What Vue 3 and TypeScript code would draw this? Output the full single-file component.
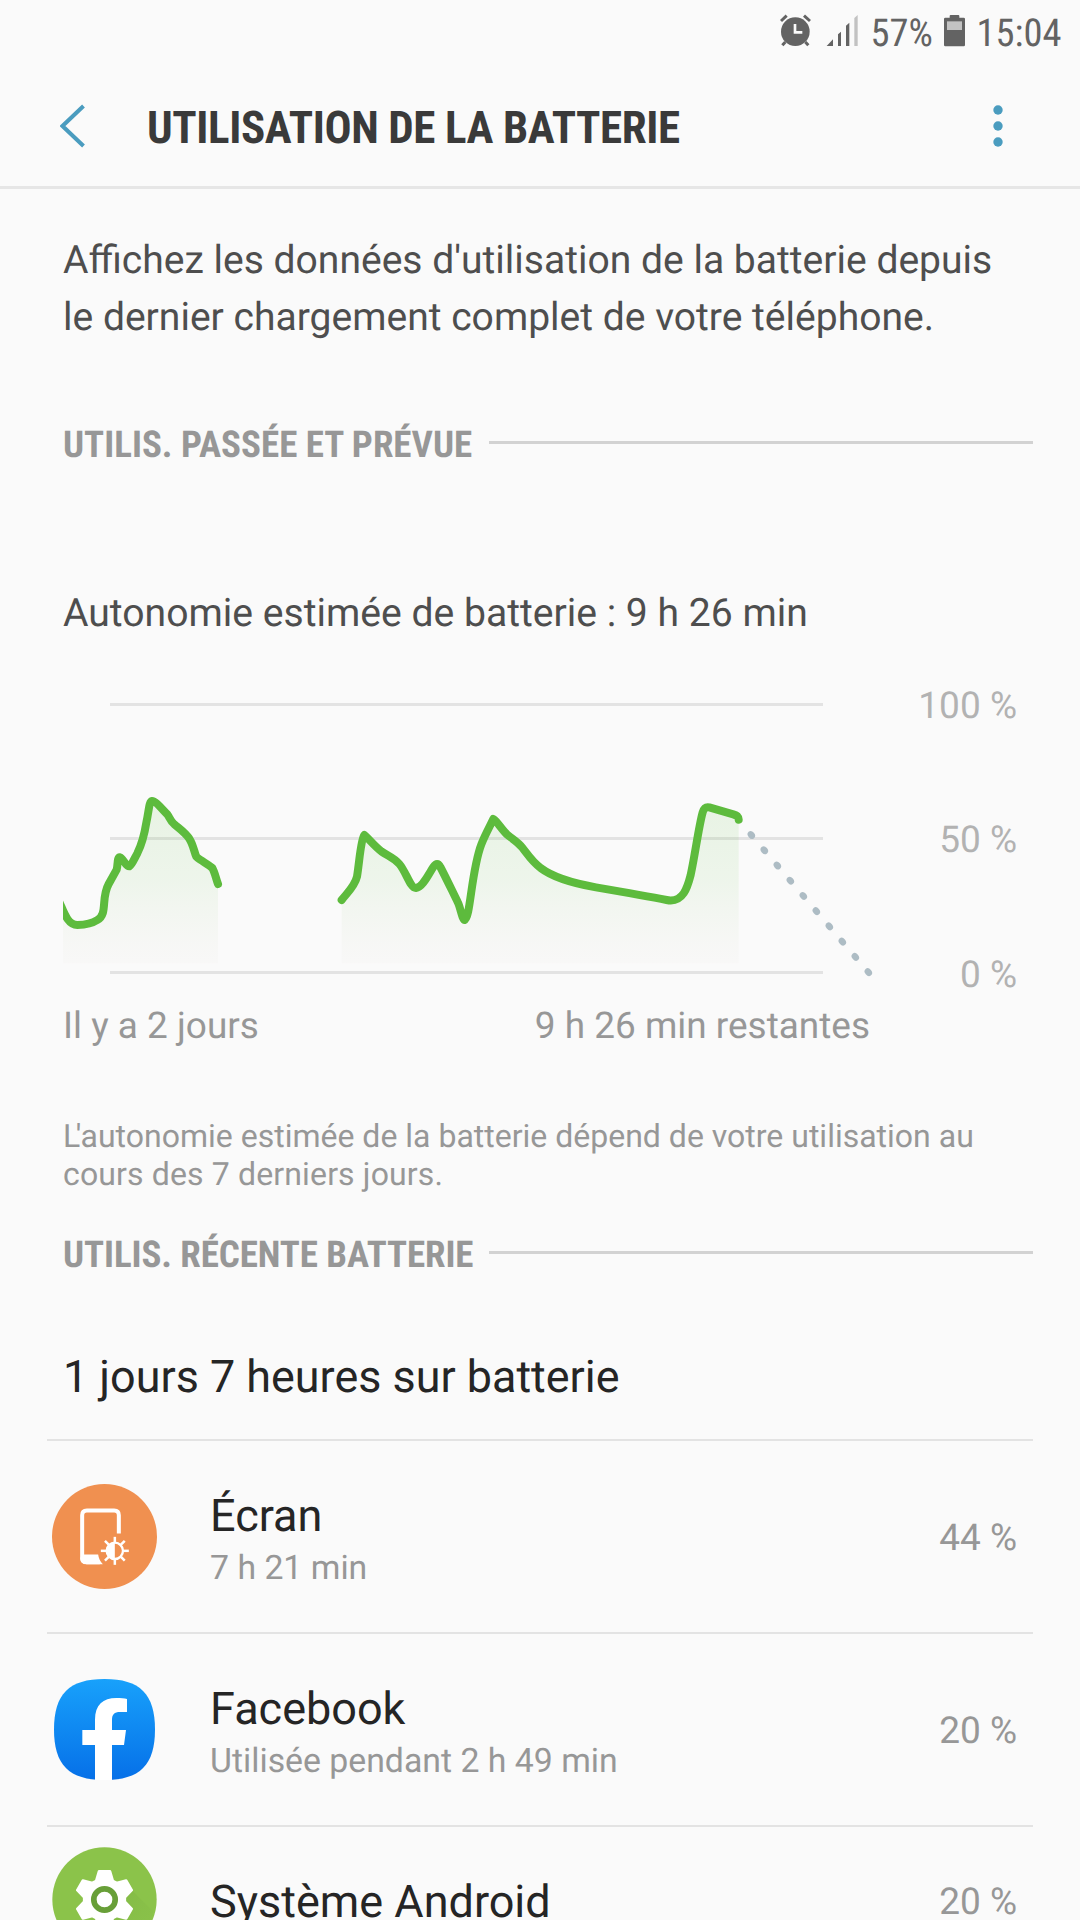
<script setup lang="ts">
interface AppUsage {
  id: string
  name: string
  detail?: string
  percent: string
}

const apps: AppUsage[] = [
  { id: 'screen', name: 'Écran', detail: '7 h 21 min', percent: '44 %' },
  { id: 'facebook', name: 'Facebook', detail: 'Utilisée pendant 2 h 49 min', percent: '20 %' },
  { id: 'android', name: 'Système Android', percent: '20 %' },
]

const levels = ['100 %', '50 %', '0 %']
const gridLines = [704.5, 838.5, 972.5]

// Level curves, in thirds of a pixel
const pastCurve =
  'M58 966C70 992 82 1035 112 1035C140 1034 160 1028 172 1020C204 1003 182 955 206 912L230 869C234 855 231 831 240 832C249 834 257 860 268 859C276 854 282 838 292 820C306 792 313 765 319 728C327 692 327 664 336 663C346 662 368 689 382 703C388 711 392 724 402 732C418 746 434 756 448 776C460 794 463 818 469 830C484 844 503 851 517 864C525 878 528 897 534 912'
const recentCurve =
  'M905 960C920 940 944 920 951 890C959 840 962 780 973 765C990 780 1003 798 1024 814C1046 829 1061 832 1078 852C1098 875 1111 925 1128 924C1148 922 1167 880 1180 861C1188 849 1195 849 1201 861C1218 893 1240 940 1254 968C1262 986 1267 1020 1274 1020C1291 1016 1294 870 1324 793C1336 763 1350 738 1360 717C1374 727 1385 749 1402 764C1418 778 1433 785 1447 803C1464 825 1477 846 1502 864C1540 893 1600 910 1668 922C1750 936 1830 950 1880 960C1930 970 1943 920 1952 885C1966 820 1976 740 1988 697C1992 684 1998 680 2008 682L2080 703C2092 707 2095 708 2096 719'

const pastArea = `${pastCurve}V1150H58Z`
const recentArea = `${recentCurve}V1150H905Z`

const dots = Array.from({ length: 10 }, (_, i) => ({
  x: 2134 + i * 39,
  y: 765 + i * 45.7,
}))

function polar(radius: number, degrees: number): string {
  const a = (degrees * Math.PI) / 180
  return `${(radius * Math.cos(a)).toFixed(1)} ${(radius * Math.sin(a)).toFixed(1)}`
}

const gear =
  'M' +
  Array.from({ length: 6 }, (_, i) => {
    const c = -90 + i * 60
    return [polar(61, c - 24), polar(86, c - 11), polar(86, c + 11), polar(61, c + 24)].join('L')
  }).join('L') +
  'Z'
</script>

<template>
  <div class="screen">
    <div class="status">
      <svg class="alarm" viewBox="59 42 93 99" width="31" height="33">
        <circle cx="105" cy="95" r="43" fill="#636363" />
        <path d="M62 63L79 47M131 47L149 63M75 126L66 136M135 126L144 136" stroke="#636363" stroke-width="9" />
        <path d="M104 72V97H126" fill="none" stroke="#fafafa" stroke-width="8" />
      </svg>
      <svg class="signal" viewBox="198 42 99 99" width="33" height="33">
        <path d="M200 138H219V118ZM234 138V103L243 95V138ZM258 138V77L268 68V138Z" fill="#636363" />
        <path d="M283 138V54L293 45V138Z" fill="#c2c2c2" />
      </svg>
      <span class="pct">57%</span>
      <svg class="cell" viewBox="552 42 63 99" width="21" height="33">
        <path d="M569 53V48Q569 45 572 45H595Q598 45 598 48V53H611Q615 53 615 57V135Q615 139 611 139H556Q552 139 552 135V57Q552 53 556 53Z" fill="#636363" />
        <path d="M561 64H606V90H561Z" fill="#c2c2c2" />
      </svg>
      <span class="clock">15:04</span>
    </div>

    <header class="header">
      <svg class="back" viewBox="0 0 26 44" width="26" height="44">
        <path d="M23.5 2L2.5 22L23.5 42" fill="none" stroke="#4a9cbf" stroke-width="4" />
      </svg>
      <h1>UTILISATION DE LA BATTERIE</h1>
      <svg class="more" viewBox="0 0 10 42" width="10" height="42">
        <circle v-for="y in [5, 21, 37]" :key="y" cx="5" :cy="y" r="4.7" fill="#4a9cbf" />
      </svg>
    </header>

    <p class="intro">Affichez les données d'utilisation de la batterie depuis<br />le dernier chargement complet de votre téléphone.</p>

    <div class="section first"><h2>UTILIS. PASSÉE ET PRÉVUE</h2><i></i></div>

    <p class="estimate">Autonomie estimée de batterie : 9 h 26 min</p>

    <div class="chart">
      <svg viewBox="63 685 820 311" width="820" height="311">
        <defs>
          <linearGradient id="fade" gradientUnits="userSpaceOnUse" x1="0" y1="650" x2="0" y2="1160">
            <stop offset="0" stop-color="#5fbd3e" stop-opacity=".12" />
            <stop offset=".5" stop-color="#5fbd3e" stop-opacity=".08" />
            <stop offset="1" stop-color="#c8b8a8" stop-opacity=".03" />
          </linearGradient>
        </defs>
        <path v-for="y in gridLines" :key="y" :d="`M110 ${y}H823`" stroke="#e3e3e3" stroke-width="3" />
        <g transform="translate(40 580) scale(.333333)">
          <path :d="pastArea" fill="url(#fade)" />
          <path :d="recentArea" fill="url(#fade)" />
          <g fill="none" stroke="#5dbb3d" stroke-width="24" stroke-linecap="round" stroke-linejoin="round">
            <path :d="pastCurve" />
            <path :d="recentCurve" />
          </g>
          <ellipse
            v-for="d in dots"
            :key="d.x"
            rx="12.5"
            ry="10"
            :transform="`translate(${d.x} ${d.y}) rotate(49.5)`"
            fill="#adbcc4"
          />
        </g>
      </svg>
      <div class="levels"><span v-for="l in levels" :key="l">{{ l }}</span></div>
    </div>
    <div class="axis"><span>Il y a 2 jours</span><span>9 h 26 min restantes</span></div>

    <p class="note"><span class="elision">L</span>'autonomie estimée de la batterie dépend de votre utilisation au<br /><span class="last">cours des 7 derniers jours.</span></p>

    <div class="section second"><h2>UTILIS. RÉCENTE BATTERIE</h2><i></i></div>

    <p class="since">1 jours 7 heures sur batterie</p>

    <ul class="list">
      <li v-for="a in apps" :key="a.id" :class="{ single: !a.detail }">
        <div class="icon">
          <svg v-if="a.id === 'screen'" viewBox="36.5 41.5 315 315" width="105" height="105">
            <circle cx="194" cy="199" r="157.5" fill="#f09050" />
            <path d="M237 190V135Q237 121 223 121H141Q127 121 127 135V262Q127 276 141 276H180" fill="none" stroke="#fff" stroke-width="12" />
            <path d="M127 253H175Q177 270 189 282H140Q121 282 121 264Z" fill="#fff" />
            <g transform="translate(225 242)">
              <circle r="24.5" fill="none" stroke="#fff" stroke-width="7" />
              <path d="M0 -26A26 26 0 0 0 0 26Z" fill="#fff" />
              <path v-for="k in 8" :key="k" d="M26 0H42" :transform="`rotate(${k * 45})`" stroke="#fff" stroke-width="7.5" />
            </g>
          </svg>
          <svg v-else-if="a.id === 'facebook'" viewBox="0 0 303 303" width="101" height="101">
            <defs>
              <linearGradient id="fb" x1="0" y1="0" x2="0" y2="1">
                <stop offset="0" stop-color="#18a1fb" />
                <stop offset="1" stop-color="#0670e8" />
              </linearGradient>
            </defs>
            <path d="M151.5 0C258 0 303 45 303 151.5C303 258 258 303 151.5 303C45 303 0 258 0 151.5C0 45 45 0 151.5 0Z" fill="url(#fb)" />
            <path d="M123 303V198H85V153H123V122C123 78 147 57 187 57C200 57 212 58 219 60V99H198C181 99 174 107 174 122V153H216L210 198H174V303Z" fill="#fff" />
          </svg>
          <svg v-else viewBox="-157 -157 314 314" width="105" height="105">
            <defs>
              <linearGradient id="shade" gradientUnits="userSpaceOnUse" x1="30" y1="30" x2="115" y2="115">
                <stop offset="0" stop-color="#6aa038" stop-opacity=".6" />
                <stop offset="1" stop-color="#7cb342" stop-opacity=".25" />
              </linearGradient>
            </defs>
            <circle r="156" fill="#8bc34a" />
            <path d="M80 -30L146 36A156 156 0 0 1 20 148L-50 80Z" fill="url(#shade)" opacity=".3" />
            <path :d="gear" fill="#fff" stroke="#fff" stroke-width="8" stroke-linejoin="round" />
            <circle r="32" fill="#fff" stroke="#689f38" stroke-width="17" />
          </svg>
        </div>
        <div class="label">
          <strong>{{ a.name }}</strong>
          <small v-if="a.detail">{{ a.detail }}</small>
        </div>
        <span class="share">{{ a.percent }}</span>
      </li>
    </ul>
  </div>
</template>

<style>
html,
body {
  margin: 0;
  background: #fafafa;
  overflow: hidden;
}
</style>

<style scoped>
.screen {
  width: 1080px;
  height: 1920px;
  overflow: hidden;
  background: #fafafa;
  font-family: Roboto, 'Liberation Sans', sans-serif;
  text-rendering: geometricPrecision;
  color: #4e4e4e;
}
p,
h1,
h2,
ul {
  margin: 0;
  padding: 0;
}
svg {
  display: block;
  flex: none;
}
.status {
  height: 66px;
  display: flex;
  box-sizing: border-box;
  padding-left: 779.5px;
  font-size: 38.5px;
  line-height: 67px;
  color: #636363;
  font-family: 'Roboto Condensed', Roboto, sans-serif;
  font-stretch: 75%;
}
.status svg {
  margin-top: 14px;
}
.signal {
  margin-left: 15px;
}
.pct {
  width: 73px;
  margin-left: 12px;
}
.clock {
  margin-left: 12px;
}
.header {
  height: 117px;
  padding: 3px 77px 0 60px;
  border-bottom: 3px solid #e6e6e6;
  display: flex;
  align-items: center;
}
.header svg {
  margin-top: -3px;
}
.header h1 {
  flex: 1;
  margin-left: 61px;
  font: 700 45px/60px 'Roboto Condensed', Roboto, sans-serif;
  font-stretch: 75%;
  letter-spacing: -0.4px;
  color: #3a3a3a;
  white-space: nowrap;
}
.intro {
  padding: 43px 0 0 63px;
  font-size: 39.06px;
  line-height: 56.7px;
  white-space: nowrap;
}
.section {
  display: flex;
  align-items: center;
  height: 44px;
  padding: 0 47px 0 63px;
}
.section h2 {
  width: 426px;
  padding-top: 2px;
  font: 700 37px/44px 'Roboto Condensed', Roboto, sans-serif;
  font-stretch: 75%;
  color: #979797;
  white-space: nowrap;
}
.section i {
  flex: 1;
  height: 3px;
  margin-top: -5px;
  background: #d2d2d2;
}
.first {
  margin-top: 78px;
}
.estimate {
  margin-top: 123px;
  padding-left: 63px;
  font-size: 39.12px;
  line-height: 46px;
}
.chart {
  display: flex;
  justify-content: space-between;
  margin-top: 48.5px;
  padding: 0 64px 0 63px;
}
.levels {
  display: flex;
  flex-direction: column;
  justify-content: space-between;
  margin: 1px -1px -1px 0;
  text-align: right;
  font-size: 37px;
  line-height: 42px;
  color: #b2b2b2;
}
.axis {
  display: flex;
  justify-content: space-between;
  width: 807px;
  margin: 10px 0 0 63px;
  font-size: 36.95px;
  line-height: 42px;
  color: #979797;
}
.note {
  margin-top: 69px;
  padding-left: 63px;
  font-size: 32px;
  line-height: 38px;
  color: #979797;
  white-space: nowrap;
}
.elision {
  letter-spacing: -4.5px;
}
.last {
  letter-spacing: 0.14px;
}
.second {
  margin-top: 40px;
}
.second h2 {
  letter-spacing: -0.1px;
}
.since {
  margin-top: 73px;
  padding-left: 63px;
  font-size: 44.9px;
  line-height: 54px;
  color: #252525;
}
.list {
  margin: 35px 47px 0;
  list-style: none;
}
.list li {
  display: flex;
  align-items: center;
  height: 191px;
  border-top: 2px solid #e3e3e3;
}
.list li.single {
  height: 146px;
}
.icon {
  width: 115px;
  display: flex;
  justify-content: center;
}
.label {
  flex: 1;
  margin-left: 48px;
  padding-top: 5px;
}
.single .label {
  padding-top: 4px;
}
.label strong,
.label small {
  display: block;
}
.label strong {
  font-size: 45px;
  font-weight: 400;
  line-height: 54px;
  color: #252525;
}
.label small {
  margin-top: 6px;
  font-size: 33.8px;
  line-height: 40px;
  color: #979797;
}
.share {
  margin-right: 16px;
  padding-top: 6px;
  font-size: 37px;
  line-height: 42px;
  color: #979797;
}
</style>
